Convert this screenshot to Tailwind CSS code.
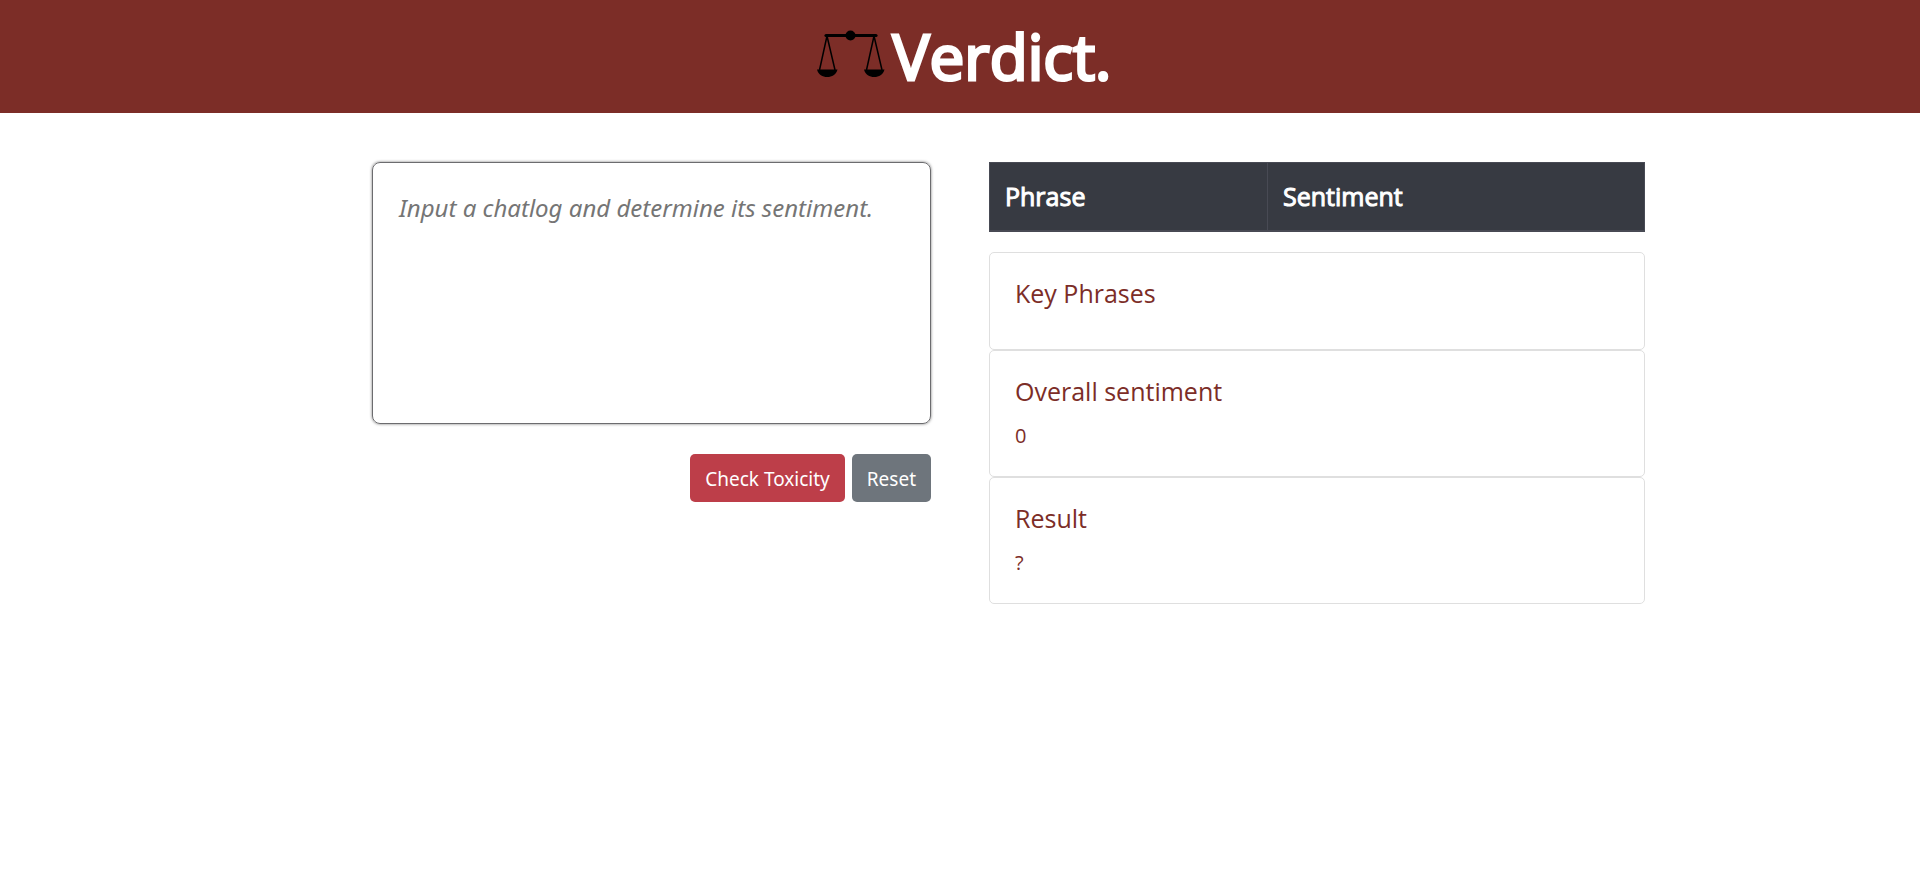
<!DOCTYPE html>
<html lang="en">
<head>
<meta charset="utf-8">
<meta name="viewport" content="width=device-width, initial-scale=1">
<title>Verdict.</title>
<script src="https://cdn.jsdelivr.net/npm/@tailwindcss/browser@4"></script>
</head>
<body class="bg-white font-['Open_Sans',sans-serif] text-xl">
<header class="flex h-[113px] items-center justify-center gap-2 bg-[#7c2d27] pb-0.5 pl-2">
  <svg class="mb-1.5 h-12 w-[68px] shrink-0" viewBox="0 0 68 48" aria-hidden="true">
    <g fill="none" stroke="#000">
      <path d="M9 6.500H59" stroke-width="3.200" stroke-linecap="round"/>
      <path d="M10 7L2.500 41M10 7L18 41M57 7L49.500 41M57 7L65 41" stroke-width="1.500"/>
    </g>
    <circle cx="33.500" cy="6.500" r="5"/>
    <path d="M0 40.500H20.500C19 46 15 48 10.250 48S1.500 46 0 40.500ZM47 40.500H67.500C66 46 62 48 57.250 48S48.500 46 47 40.500Z"/>
  </svg>
  <h1 class="text-[62px] leading-none font-normal text-white [-webkit-text-stroke:3px_white] [paint-order:stroke]">Verdict.</h1>
</header>
<main class="grid grid-cols-1 items-start gap-x-[58px] gap-y-10 px-6 pt-[49px] lg:grid-cols-[559fr_656fr] lg:pr-[275px] lg:pl-[372px]">
  <form>
    <textarea id="chatlog" aria-label="Chatlog" class="block h-[262px] w-full resize-none rounded-lg border border-[#6c6c6f] px-[26px] py-[27px] font-['Noto_Sans',sans-serif] text-2xl leading-9 shadow-[0_0_3px_#777] outline-none placeholder:text-[#757575] placeholder:italic" placeholder="Input a chatlog and determine its sentiment."></textarea>
    <div class="mt-[30px] flex justify-end gap-[7px] font-['Noto_Sans',sans-serif] text-[19px] text-white">
      <button type="button" class="h-12 rounded-[5px] bg-[#bd3e49] px-[15px] pt-0.5">Check Toxicity</button>
      <button type="reset" class="h-12 rounded-[5px] bg-[#6e757c] px-[15px] pt-0.5">Reset</button>
    </div>
  </form>
  <section>
    <table class="w-full border-collapse text-left text-[25px] leading-[37px] text-white">
      <thead class="bg-[#373a42]">
        <tr>
          <th scope="col" class="w-[278px] border border-b-2 border-[#484a54] px-[15px] py-[15px] font-normal [-webkit-text-stroke:1px_white]">Phrase</th>
          <th scope="col" class="border border-b-2 border-[#484a54] px-[15px] py-[15px] font-normal [-webkit-text-stroke:1px_white]">Sentiment</th>
        </tr>
      </thead>
    </table>
    <div class="mt-5 text-[#7c2d27]">
      <article class="rounded-[5px] border border-[#dfdfdf] p-[25px]">
        <h2 class="mb-4 text-[25px] leading-[30px]">Key Phrases</h2>
      </article>
      <article class="rounded-[5px] border border-[#dfdfdf] p-[25px]">
        <h2 class="mb-[15px] text-[25px] leading-[30px]">Overall sentiment</h2>
        <p class="leading-[30px]">0</p>
      </article>
      <article class="rounded-[5px] border border-[#dfdfdf] p-[25px]">
        <h2 class="mb-[15px] text-[25px] leading-[30px]">Result</h2>
        <p class="leading-[30px]">?</p>
      </article>
    </div>
  </section>
</main>
</body>
</html>
